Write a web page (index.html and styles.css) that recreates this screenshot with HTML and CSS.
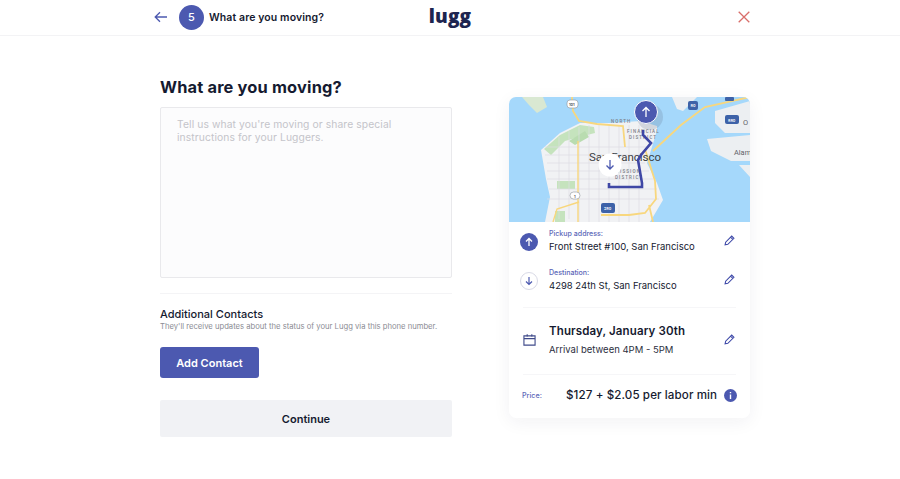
FILE: index.html
```html
<!DOCTYPE html>
<html lang="en">
<head>
<meta charset="utf-8">
<title>What are you moving?</title>
<link rel="stylesheet" href="styles.css">
</head>
<body>
<header class="topbar">
  <div class="topbar-left">
    <svg class="back" viewBox="0 0 13 12" width="13" height="12"><path d="M13 6H1.500M6 1.200 1.200 6 6 10.800" fill="none" stroke="#4c59b0" stroke-width="1.300"/></svg>
    <span class="step">5</span>
    <span class="topbar-title">What are you moving?</span>
  </div>
  <div class="logo">lugg</div>
  <div class="topbar-right">
    <svg viewBox="0 0 12 12" width="12" height="12"><path d="M.7.7l10.600 10.600M11.300.7.7 11.300" fill="none" stroke="#d96e6a" stroke-width="1.300"/></svg>
  </div>
</header>
<main class="page">
  <section class="form">
    <h1 class="heading">What are you moving?</h1>
    <textarea class="notes" placeholder="Tell us what you're moving or share special instructions for your Luggers."></textarea>
    <hr class="rule">
    <h2 class="contacts-title">Additional Contacts</h2>
    <p class="contacts-sub">They'll receive updates about the status of your Lugg via this phone number.</p>
    <button class="btn btn-add">Add Contact</button>
    <button class="btn btn-continue">Continue</button>
  </section>
  <aside class="card">
    <svg class="map" viewBox="0 0 241 125" width="241" height="125">
      <rect width="241" height="125" fill="#a5d8fb"/>
      <path d="M13 0 H34L38 10 28 16 20 8Z" fill="#d9e8d2"/>
      <path d="M32 53 51 36 71 26 101 26 132 24 148 29 148 33 143 50 138 66 148 86 154 103 141 125H36L41 100 37 82Z" fill="#f1f2f4"/>
      <path d="M35 52 51 38 71 28 85 30 86 36 70 40 56 44 42 58Z" fill="#c5e3bd"/>
      <path d="M60 44 76 34 80 40 66 48Z" fill="#b9dcb0"/>
      <path d="M48 84H66V92H48ZM46 114H56V125H46Z" fill="#c5e3bd"/>
      <path d="M163 0H188L174 14 168 12ZM206 14 241 4V36L216 36 206 26ZM198 42 241 38V64L222 64 202 54ZM230 68H241V80Z" fill="#eceff2"/>
      <g fill="none" stroke="#dcdde2" stroke-width=".7">
        <path d="M36 50H140M36 58H140M38 66H136M38 74H140M38 82H144M40 92H148M38 102H150M50 40V122M60 34V122M70 30V125M80 28V125M90 28V125M100 28V125M110 28V125M120 28V125M130 28V125"/>
      </g>
      <g fill="none" stroke="#f8d77e" stroke-width="1.800">
        <path d="M63 0 64 14 70 24 88 27 114 29 116 50M136 52 146 84 147 102 136 116 120 118H92M144 54 172 28 196 10 241 0M140 108 144 125"/>
        <path d="M69 44V125M70 105 48 112 44 125" stroke-width="1.400"/>
      </g>
      <g fill="#fff" stroke="#8f949a" stroke-width=".6">
        <rect x="58" y="3" width="11" height="8" rx="3"/>
        <rect x="61" y="95" width="10" height="7" rx="3.500"/>
      </g>
      <g fill="#3d62a8">
        <rect x="179" y="4" width="10" height="9" rx="2"/>
        <rect x="92" y="106" width="14" height="10" rx="2"/>
        <rect x="216" y="18" width="14" height="9" rx="2"/>
        <rect x="216" y="0" width="9" height="4" rx="1"/>
      </g>
      <text x="60" y="9" class="map-shield">101</text>
      <text x="65" y="101" class="map-shield">1</text>
      <text x="95" y="113" class="map-shield map-shield-light">280</text>
      <text x="181.500" y="10" class="map-shield map-shield-light">80</text>
      <text x="219" y="24.500" class="map-shield map-shield-light">880</text>
      <text x="102" y="25.500" class="map-small">NORTH</text>
      <text x="118" y="35.500" class="map-small">FINANCIAL</text>
      <text x="120" y="42" class="map-small">DISTRICT</text>
      <text x="106" y="75.500" class="map-small">MISSION</text>
      <text x="106" y="82" class="map-small">DISTRICT</text>
      <text x="80" y="64" class="map-city">San Francisco</text>
      <text x="225" y="58" class="map-side">Alam</text>
      <text x="234" y="28" class="map-side">O</text>
      <circle cx="141" cy="20" r="13" fill="#5c6b80" opacity=".2"/>
      <path d="M134 33V38L142 46 132 58 129 63 133 86V90H100V86" fill="none" stroke="#3f47a5" stroke-width="2.600"/>
      <circle cx="137" cy="15" r="11.500" fill="#4c59b0" stroke="#fff"/>
      <path d="M137 20V10.500M133.500 14 137 10.500 140.500 14" fill="none" stroke="#fff" stroke-width="1.300"/>
      <circle cx="101" cy="68" r="11.500" fill="#fff"/>
      <path d="M101 63V72M97.500 68.500 101 72 104.500 68.500" fill="none" stroke="#4c59b0" stroke-width="1.300"/>
    </svg>
    <div class="stops">
      <div class="row">
        <span class="dot dot-fill"><svg viewBox="0 0 10 10" width="10" height="10"><path d="M5 9V1.500M2 4.500 5 1.500 8 4.500" fill="none" stroke="#fff" stroke-width="1.300"/></svg></span>
        <div class="row-body"><div class="label">Pickup address:</div><div class="value">Front Street #100, San Francisco</div></div>
        <svg class="pencil" viewBox="0 0 10 10" width="11" height="11"><path d="M1 9 1.500 6.500 7 1 9 3 3.500 8.500ZM6 2 8 4" fill="none" stroke="#3f4aa8" stroke-width="1"/></svg>
      </div>
      <div class="row">
        <span class="dot dot-line"><svg viewBox="0 0 10 10" width="10" height="10"><path d="M5 1V8.500M2 5.500 5 8.500 8 5.500" fill="none" stroke="#4c59b0" stroke-width="1.200"/></svg></span>
        <div class="row-body"><div class="label">Destination:</div><div class="value">4298 24th St, San Francisco</div></div>
        <svg class="pencil" viewBox="0 0 10 10" width="11" height="11"><path d="M1 9 1.500 6.500 7 1 9 3 3.500 8.500ZM6 2 8 4" fill="none" stroke="#3f4aa8" stroke-width="1"/></svg>
      </div>
    </div>
    <div class="when">
      <svg class="cal" viewBox="0 0 14 14" width="13" height="14"><path d="M1 2.500H13V12.500H1ZM1 5.500H13M4.500 .8V3.500M9.500 .8V3.500" fill="none" stroke="#3f4a8a" stroke-width="1.200"/></svg>
      <div class="row-body"><div class="date">Thursday, January 30th</div><div class="arrival">Arrival between 4PM - 5PM</div></div>
      <svg class="pencil" viewBox="0 0 10 10" width="11" height="11"><path d="M1 9 1.500 6.500 7 1 9 3 3.500 8.500ZM6 2 8 4" fill="none" stroke="#3f4aa8" stroke-width="1"/></svg>
    </div>
    <div class="price">
      <span class="price-label">Price:</span>
      <span class="price-value">$127 + $2.05 per labor min</span>
      <svg class="info" viewBox="0 0 13 13" width="13" height="13"><circle cx="6.500" cy="6.500" r="6.500" fill="#4c59b0"/><path d="M6.500 5.500V10M6.500 3V4.200" stroke="#fff" stroke-width="1.400"/></svg>
    </div>
  </aside>
</main>
</body>
</html>
```
FILE: styles.css
```css
* { box-sizing: border-box; }
html, body { margin: 0; height: 100%; }
body {
  background: #fff;
  color: #151a30;
  font-family: Inter, "Liberation Sans", sans-serif;
  overflow: hidden;
}
.topbar {
  height: 36px;
  border-bottom: 1px solid #f3f3f5;
  display: grid;
  grid-template-columns: 1fr auto 1fr;
  align-items: center;
  padding: 0 150px 1px 154px;
}
.topbar-left { display: flex; align-items: center; }
.back { margin-right: 12px; }
.step {
  width: 25px;
  height: 25px;
  border-radius: 50%;
  background: #4c59b0;
  color: #fff;
  font-size: 11px;
  font-weight: 500;
  display: flex;
  align-items: center;
  justify-content: center;
  margin-right: 5px;
}
.topbar-title { font-size: 10.500px; font-weight: 600; letter-spacing: .1px; }
.logo {
  font-family: "Open Sans", sans-serif;
  font-weight: 800;
  font-size: 19px;
  line-height: 30px;
  color: #1d2550;
  letter-spacing: .2px;
  margin: -2px 4px 0 0;
}
.topbar-right { display: flex; justify-content: flex-end; }
.page {
  display: flex;
  padding: 0 150px 0 160px;
  justify-content: space-between;
}
.form { width: 292px; padding-top: 39px; display: flex; flex-direction: column; align-items: flex-start; }
.heading {
  margin: 0 0 8px;
  font-size: 16.400px;
  line-height: 24px;
  font-weight: 700;
  letter-spacing: .17px;
}
.notes {
  display: block;
  width: 292px;
  height: 171px;
  border: 1px solid #e9e9ec;
  border-radius: 2px;
  background: #fcfcfd;
  padding: 10px 16px;
  font: 400 10.300px/13px Inter, sans-serif;
  resize: none;
  outline: none;
}
.notes::placeholder { color: #c4c4ca; opacity: 1; letter-spacing: .1px; }
.rule { width: 100%; border: 0; border-top: 1px solid #f4f4f6; margin: 15px 0 14px; }
.contacts-title { margin: 0; font-size: 11px; line-height: 13px; font-weight: 500; }
.contacts-sub { margin: 0 0 15px; font-size: 7.660px; line-height: 11px; color: #8b8c94; white-space: nowrap; }
.btn { border: 0; font-family: inherit; font-weight: 600; font-size: 11px; }
.btn-add {
  width: 99px;
  height: 31px;
  border-radius: 3px;
  background: #4c59b0;
  color: #fff;
  margin-bottom: 22px;
}
.btn-continue {
  width: 292px;
  height: 37px;
  border-radius: 2px;
  background: #f1f2f5;
  color: #151a30;
}
.card {
  width: 241px;
  height: 321px;
  margin-top: 61px;
  border-radius: 7px;
  background: #fff;
  box-shadow: 0 4px 18px rgba(30, 35, 70, .06);
  overflow: hidden;
}
.map { display: block; }
.map-shield { font: 600 3.800px Inter, sans-serif; fill: #444; }
.map-shield-light { fill: #fff; }
.map-small { font: 500 4.500px Roboto, sans-serif; letter-spacing: 1.100px; fill: #7c8086; }
.map-city { font: 400 11.500px Roboto, sans-serif; fill: #3c4043; }
.map-side { font: 400 7.400px Roboto, sans-serif; fill: #5f6368; }
.stops { margin: 0 14px; padding: 0 0 7px; border-bottom: 1px solid #f6f6f8; }
.row { display: flex; align-items: center; height: 39px; }
.dot {
  width: 18px;
  height: 18px;
  border-radius: 50%;
  display: flex;
  align-items: center;
  justify-content: center;
  margin: 0 11px 0 -3px;
  flex: none;
}
.dot-fill { background: #4c59b0; }
.dot-line { border: 1px solid #d9dae6; }
.row-body { flex: 1; margin-bottom: 1px; }
.label { font-size: 7.050px; line-height: 12px; color: #5c67b8; font-weight: 500; }
.value { font-size: 9.500px; line-height: 14px; }
.pencil { flex: none; margin: 0 1px 2px 0; }
.when { display: flex; align-items: center; margin: 0 14px; height: 67px; padding-bottom: 2px; border-bottom: 1px solid #f6f6f8; }
.cal { margin: 0 13px 0 0; flex: none; }
.date { font-size: 11.500px; line-height: 17px; font-weight: 600; letter-spacing: .13px; }
.arrival { font-size: 9.500px; line-height: 14px; margin-top: 3px; color: #2c2f3e; }
.price { display: flex; align-items: center; height: 43px; padding: 0 13px 3px 13px; }
.price-label { font-size: 7.200px; color: #5c67b8; width: 44px; font-weight: 500; }
.price-value { font-size: 11.600px; font-weight: 500; flex: 1; white-space: nowrap; letter-spacing: .1px; }
.info { flex: none; }
```
